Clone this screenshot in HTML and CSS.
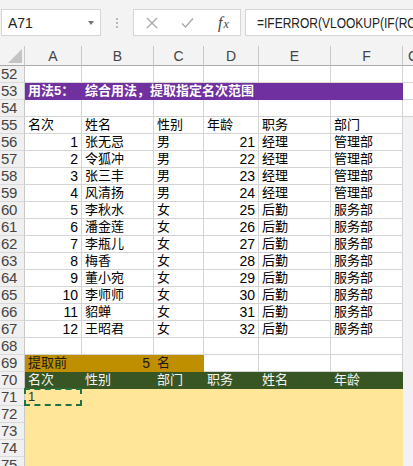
FILE: index.html
```html
<!DOCTYPE html>
<html lang="zh">
<head>
<meta charset="utf-8">
<title>Excel</title>
<link rel="stylesheet" href="styles.css">
</head>
<body>
<div class="app">
  <div class="toolbar">
    <div class="namebox"><span class="ref">A71</span><span class="caret"></span></div>
    <div class="grip"><i></i><i></i><i></i></div>
    <div class="fnbox">
      <svg class="ico" width="12" height="12" viewBox="0 0 12 12"><path d="M1 1L11 11M11 1L1 11"/></svg>
      <svg class="ico ok" width="13" height="12" viewBox="0 0 13 12"><path d="M1 6.5L4.5 10L12 1.5"/></svg>
      <span class="fx"><span class="f">f</span><span class="xx">x</span></span>
    </div>
    <div class="formula"><span class="ftext">=IFERROR(VLOOKUP(IF(ROW(A1)&gt;$F$69,&quot;&quot;,ROW(A1)),$A$56:$F$67,MATCH(B$70,$A$55:$F$55,0),0),&quot;&quot;)</span></div>
  </div>

  <div class="sheet">
    <div class="corner"><svg width="14" height="14" viewBox="0 0 14 14"><path d="M14 0V14H0Z"/></svg></div>
    <div class="ch">A</div><div class="ch">B</div><div class="ch">C</div><div class="ch">D</div><div class="ch">E</div><div class="ch">F</div><div class="ch g">G</div>

    <div class="h">52</div><div class="c"></div><div class="c"></div><div class="c"></div><div class="c"></div><div class="c"></div><div class="c"></div><div class="c gw"></div>

    <div class="h">53</div><div class="c p">用法5：</div><div class="c p s5">综合用法，提取指定名次范围</div><div class="c gw"></div>

    <div class="h">54</div><div class="c"></div><div class="c"></div><div class="c"></div><div class="c"></div><div class="c"></div><div class="c"></div><div class="c gw"></div>

    <div class="h">55</div><div class="c">名次</div><div class="c">姓名</div><div class="c">性别</div><div class="c">年龄</div><div class="c">职务</div><div class="c">部门</div><div class="c gz"></div>

    <div class="h">56</div><div class="c r">1</div><div class="c">张无忌</div><div class="c">男</div><div class="c r">21</div><div class="c">经理</div><div class="c">管理部</div><div class="c gz"></div>
    <div class="h">57</div><div class="c r">2</div><div class="c">令狐冲</div><div class="c">男</div><div class="c r">22</div><div class="c">经理</div><div class="c">管理部</div><div class="c gz"></div>
    <div class="h">58</div><div class="c r">3</div><div class="c">张三丰</div><div class="c">男</div><div class="c r">23</div><div class="c">经理</div><div class="c">管理部</div><div class="c gz"></div>
    <div class="h">59</div><div class="c r">4</div><div class="c">风清扬</div><div class="c">男</div><div class="c r">24</div><div class="c">经理</div><div class="c">管理部</div><div class="c gz"></div>
    <div class="h">60</div><div class="c r">5</div><div class="c">李秋水</div><div class="c">女</div><div class="c r">25</div><div class="c">后勤</div><div class="c">服务部</div><div class="c gz"></div>
    <div class="h">61</div><div class="c r">6</div><div class="c">潘金莲</div><div class="c">女</div><div class="c r">26</div><div class="c">后勤</div><div class="c">服务部</div><div class="c gz"></div>
    <div class="h">62</div><div class="c r">7</div><div class="c">李瓶儿</div><div class="c">女</div><div class="c r">27</div><div class="c">后勤</div><div class="c">服务部</div><div class="c gz"></div>
    <div class="h">63</div><div class="c r">8</div><div class="c">梅香</div><div class="c">女</div><div class="c r">28</div><div class="c">后勤</div><div class="c">服务部</div><div class="c gz"></div>
    <div class="h">64</div><div class="c r">9</div><div class="c">董小宛</div><div class="c">女</div><div class="c r">29</div><div class="c">后勤</div><div class="c">服务部</div><div class="c gz"></div>
    <div class="h">65</div><div class="c r">10</div><div class="c">李师师</div><div class="c">女</div><div class="c r">30</div><div class="c">后勤</div><div class="c">服务部</div><div class="c gz"></div>
    <div class="h">66</div><div class="c r">11</div><div class="c">貂蝉</div><div class="c">女</div><div class="c r">31</div><div class="c">后勤</div><div class="c">服务部</div><div class="c gz"></div>
    <div class="h">67</div><div class="c r">12</div><div class="c">王昭君</div><div class="c">女</div><div class="c r">32</div><div class="c">后勤</div><div class="c">服务部</div><div class="c gz"></div>

    <div class="h">68</div><div class="c"></div><div class="c"></div><div class="c"></div><div class="c"></div><div class="c"></div><div class="c"></div><div class="c gz"></div>

    <div class="h">69</div><div class="c gd">提取前</div><div class="c gd r">5</div><div class="c gd">名</div><div class="c"></div><div class="c"></div><div class="c"></div><div class="c gz"></div>

    <div class="h">70</div><div class="c gr">名次</div><div class="c gr">性别</div><div class="c gr">部门</div><div class="c gr">职务</div><div class="c gr">姓名</div><div class="c gr">年龄</div><div class="c gz"></div>

    <div class="h">71</div><div class="c y sel">1<span class="ants"></span></div><div class="c y s5"></div><div class="c gz"></div>
    <div class="h">72</div><div class="c y s6"></div><div class="c gz"></div>
    <div class="h">73</div><div class="c y s6"></div><div class="c gz"></div>
    <div class="h">74</div><div class="c y s6"></div><div class="c gz"></div>
    <div class="h">75</div><div class="c y s6"></div><div class="c gz"></div>
  </div>
</div>
</body>
</html>
```

FILE: styles.css
```css
html, body {
  margin: 0;
  padding: 0;
  background: #ffffff;
}

.app {
  width: 413px;
  height: 466px;
  overflow: hidden;
  font-family: "Liberation Sans", "Noto Sans CJK SC", sans-serif;
  color: #000;
}

/* ---------- formula bar ---------- */
.toolbar {
  height: 46px;
  box-sizing: border-box;
  background: #f3f3f3;
  display: flex;
  align-items: flex-start;
  padding-top: 9px;
  padding-left: 1px;
}

.namebox {
  width: 100px;
  height: 27px;
  box-sizing: border-box;
  background: #fff;
  border: 1px solid #d6d6d6;
  display: flex;
  align-items: center;
  justify-content: space-between;
  padding: 0 6px 0 6px;
  flex: none;
}

.ref {
  font-size: 14px;
  color: #222;
}

.caret {
  width: 0;
  height: 0;
  border-left: 3px solid transparent;
  border-right: 3px solid transparent;
  border-top: 4px solid #777;
}

.grip {
  width: 32px;
  height: 27px;
  flex: none;
  display: flex;
  flex-direction: column;
  align-items: center;
  justify-content: center;
  gap: 2px;
}

.grip i {
  display: block;
  width: 2px;
  height: 2px;
  background: #b8b8b8;
}

.fnbox {
  width: 108px;
  height: 27px;
  box-sizing: border-box;
  flex: none;
  background: #fff;
  border: 1px solid #d6d6d6;
  display: flex;
  align-items: center;
  padding-left: 12px;
}

.ico {
  fill: none;
  stroke: #a9a9a9;
  stroke-width: 1.4;
  flex: none;
}

.ok {
  margin-left: 23px;
}

.fx {
  margin-left: 24px;
  font-family: "Liberation Serif", serif;
  font-style: italic;
  color: #444;
  display: flex;
  align-items: baseline;
}

.fx .f {
  font-size: 16px;
}

.fx .xx {
  font-size: 12px;
  margin-left: 1px;
}

.formula {
  margin-left: 4px;
  flex: 1;
  min-width: 0;
  height: 27px;
  box-sizing: border-box;
  background: #fff;
  border: 1px solid #d6d6d6;
  border-right: none;
  padding-left: 11px;
  overflow: hidden;
  white-space: nowrap;
  display: flex;
  align-items: center;
}

.ftext {
  display: inline-block;
  font-size: 15px;
  color: #222;
  transform: scaleX(0.8);
  transform-origin: left center;
}

/* ---------- sheet grid ---------- */
.sheet {
  display: grid;
  grid-template-columns: 25px 57px 72px 50px 55px 72px 72px 1fr;
  grid-template-rows: 20px;
  grid-auto-rows: 17px;
}

.corner {
  background: #f3f3f3;
  border-right: 1px solid #c8c8c8;
  border-bottom: 1px solid #ababab;
  display: flex;
  align-items: flex-end;
  justify-content: flex-end;
  padding: 0 2px 2px 0;
}

.corner svg path {
  fill: #c4c4c4;
}

.ch {
  background: #f3f3f3;
  border-right: 1px solid #c8c8c8;
  border-bottom: 1px solid #ababab;
  text-align: center;
  font-size: 14px;
  line-height: 19px;
  padding-top: 1px;
  box-sizing: border-box;
  color: #444;
  overflow: hidden;
}

.ch.g {
  text-align: left;
  padding-left: 5px;
  border-right: none;
}

.h {
  background: #f0f0f0;
  border-right: 1px solid #c8c8c8;
  border-bottom: 1px solid #dadada;
  font-size: 15px;
  line-height: 16px;
  color: #444;
  padding-left: 1px;
  letter-spacing: -0.3px;
  overflow: hidden;
}

.c {
  border-right: 1px solid #d4d4d4;
  border-bottom: 1px solid #d4d4d4;
  font-size: 13px;
  line-height: 16px;
  padding: 0 2px 0 3px;
  white-space: nowrap;
  overflow: visible;
  position: relative;
}

.r {
  text-align: right;
  padding-right: 3px;
  font-size: 14px;
}

.s5 {
  grid-column: span 5;
}

.s6 {
  grid-column: span 6;
}

.gw {
  border-right: none;
}

.gz {
  background: #f2f2f4;
  border-right: none;
  border-bottom-color: #f2f2f4;
}

.p {
  background: #7030a0;
  border-color: #7030a0;
  color: #fff;
  font-weight: 700;
}

.gd {
  background: #bf8f00;
  border-color: #bf8f00;
  color: #1a1a1a;
}

.gr {
  background: #375623;
  border-color: #375623;
  color: #f4f4f4;
}

.y {
  background: #ffe699;
  border-color: #ffe699;
}

.sel {
  color: #333;
}

.ants {
  position: absolute;
  left: -1px;
  top: -1px;
  right: -1px;
  bottom: -1px;
  border: 2px dashed #217346;
}
```
